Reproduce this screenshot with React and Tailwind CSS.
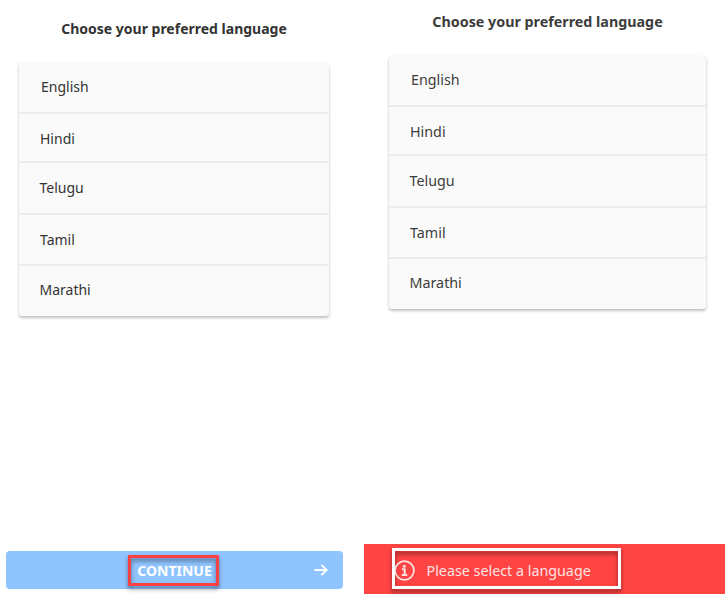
import React from "react";

const languages = ["English", "Hindi", "Telugu", "Tamil", "Marathi"];
const rowHeights = ["h-[51px]", "h-[49px]", "h-[52px]", "h-[51px]", "h-[50px]"];
const labelOffsets = ["pt-[14px] pl-[22px]", "pt-[15px] pl-[21px]", "pt-[15px] pl-[20.5px]", "pt-[15px] pl-[21px]", "pt-[14px] pl-[20.5px]"];

function LanguageList({ className }) {
  return (
    <ul className={`h-[253px] overflow-hidden rounded-[3px] bg-[#fafafa] shadow-[0_2px_3px_rgba(0,0,0,0.24),0_0_1px_rgba(0,0,0,0.12)] ${className}`}>
      {languages.map((name, i) => (
        <li
          key={name}
          className={`${rowHeights[i]} ${labelOffsets[i]} leading-5 ${i < 4 ? "border-b-2 border-[#ededed]" : ""}`}
        >
          {name}
        </li>
      ))}
    </ul>
  );
}

export default function App() {
  return (
    <main className="flex h-[595px] w-[725px] overflow-hidden bg-white font-['Noto_Sans',sans-serif] text-[14px] text-[#333]">
      <section className="flex h-full w-[364px] flex-col">
        <h1 className="ml-[19px] mt-[19px] h-5 w-[310px] whitespace-nowrap text-center text-[14px] font-bold leading-5">
          Choose your preferred language
        </h1>
        <LanguageList className="ml-[19px] mt-[24px] w-[310px]" />
        <button className="mb-[6px] ml-[6px] mt-auto grid h-[38px] w-[337px] grid-cols-[122px_91px_1fr] items-center rounded-[4px] bg-[#90c4ff] text-white">
          <span />
          <span className="relative flex h-[31px] items-center justify-center pl-[2px] font-bold">
            <span className="absolute inset-0 border-[3px] border-[#fc4144] drop-shadow-[0_3px_2px_rgba(0,0,0,0.45)]" />
            <span className="relative">CONTINUE</span>
          </span>
          <svg className="mr-[15px] justify-self-end" width="14" height="14" viewBox="0 0 14 14" fill="none" stroke="currentColor" strokeWidth="1.9">
            <path d="M0.5 7H12.5M7.4 1.8L12.6 7L7.4 12.2" />
          </svg>
        </button>
      </section>
      <section className="flex h-full w-[361px] flex-col text-[14.3px] text-[#3c3c3c]">
        <h1 className="ml-[25px] mt-3 h-5 w-[317px] whitespace-nowrap text-center text-[14.3px] font-bold leading-5">
          Choose your preferred language
        </h1>
        <LanguageList className="ml-[25px] mt-[24px] w-[317px]" />
        <div className="mb-px mt-auto flex h-[50px] bg-[#ff4444] pl-7 pt-1 text-[#ffe3e3]">
          <div className="relative flex h-[41px] w-[229px] items-center pl-[2px] pt-[4px]">
            <span className="absolute inset-0 border-[3px] border-white drop-shadow-[0_3px_2px_rgba(0,0,0,0.45)]" />
            <svg className="relative -mt-px shrink-0" width="21" height="21" viewBox="0 0 21 21" fill="none" stroke="currentColor">
              <circle cx="10.5" cy="10.5" r="9.4" strokeWidth="1.7" />
              <circle cx="10.3" cy="6.2" r="1.5" fill="currentColor" stroke="none" />
              <path d="M8 9.2H10.7V15M7.8 15H13.2" strokeWidth="2" />
            </svg>
            <span className="relative ml-[11.5px] whitespace-nowrap">Please select a language</span>
          </div>
        </div>
      </section>
    </main>
  );
}
